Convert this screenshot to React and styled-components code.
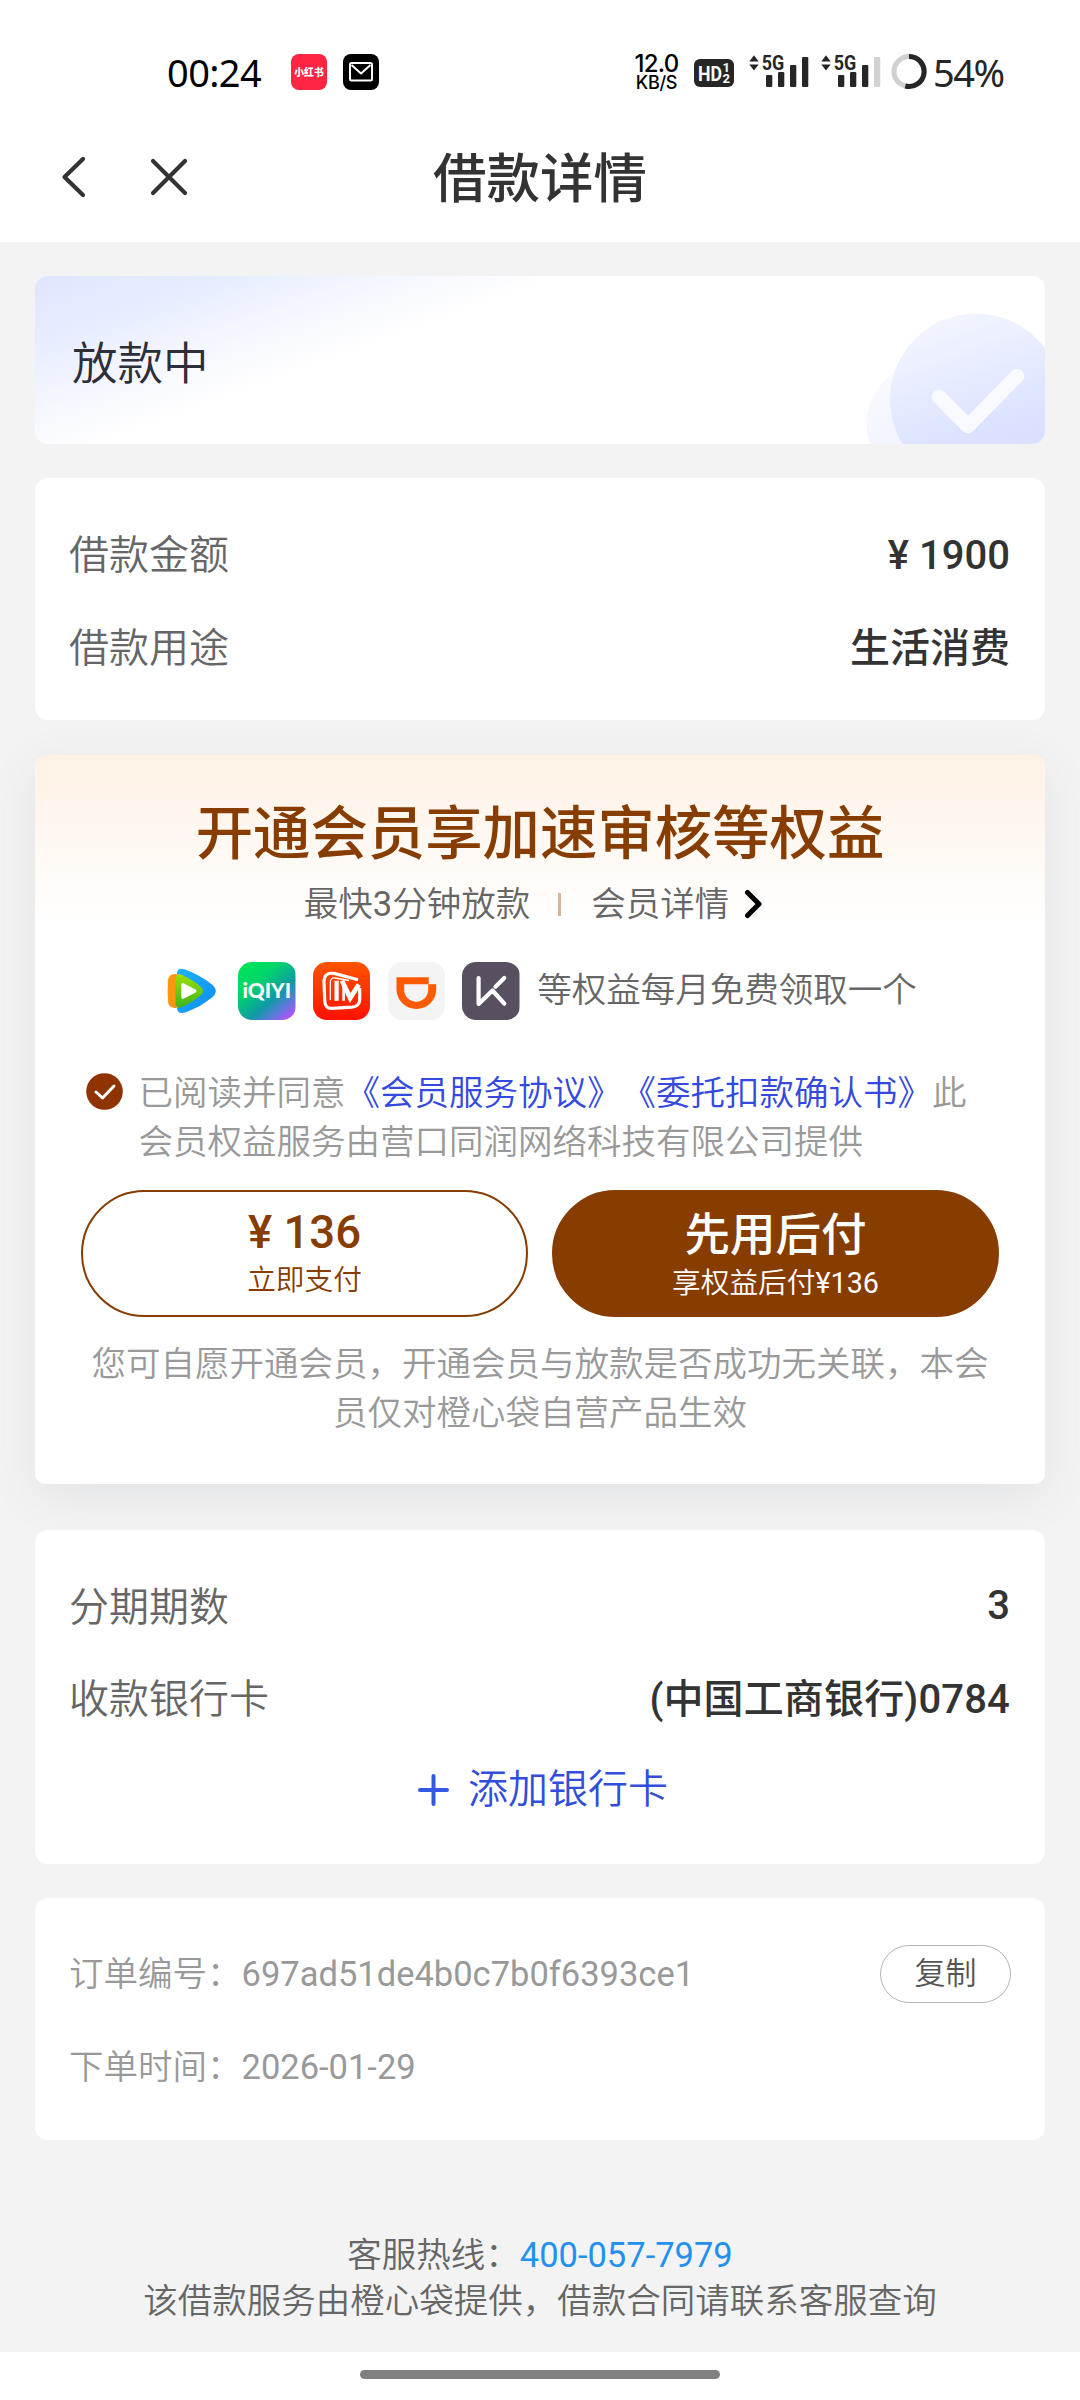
import React from "react";
import styled, { createGlobalStyle } from "styled-components";

const GlobalStyle = createGlobalStyle`
  * { box-sizing: border-box; }
  html, body { margin: 0; padding: 0; background: #fff; }
  body {
    font-family: Roboto, "Noto Sans CJK SC", sans-serif;
    text-spacing-trim: space-all;
    color: #333;
  }
  button { font-family: inherit; cursor: pointer; margin: 0; }
`;

const Screen = styled.div`
  width: 1080px;
  height: 2400px;
  display: flex;
  flex-direction: column;
  background: #f3f3f3;
  overflow: hidden;
`;

/* ---------- status bar ---------- */
const StatusBar = styled.div`
  height: 112px;
  padding: 32px 76px 0 167px;
  display: flex;
  align-items: center;
  background: #fff;
  flex: none;
`;
const Clock = styled.div`
  width: 124px;
  font: 400 38px/44px "Noto Sans", sans-serif;
  letter-spacing: -0.6px;
  color: #000;
  white-space: nowrap;
`;
const NoticeIcon = styled.div`
  width: 36px;
  height: 36px;
  border-radius: 8px;
  margin-right: 16px;
  background: ${(p) => p.$bg};
  color: #fff;
  font: 900 9.8px/36px "Noto Sans CJK SC", sans-serif;
  display: flex;
  align-items: center;
  justify-content: center;
  white-space: nowrap;
`;
const StatusRight = styled.div`
  margin-left: auto;
  display: flex;
  align-items: center;
`;
const NetSpeed = styled.div`
  display: flex;
  flex-direction: column;
  align-items: center;
  width: 46px;
  margin-right: 14px;
  color: #000;
  white-space: nowrap;
`;
const SpeedValue = styled.span`
  font: 500 24px/20px Inter, sans-serif;
  letter-spacing: -0.7px;
`;
const SpeedUnit = styled.span`
  font: 500 18px/17px Inter, sans-serif;
  letter-spacing: -0.3px;
`;
const HdBadge = styled.svg`
  margin: 2px 15px 0 0;
`;
const SignalIcon = styled.svg`
  flex: none;
`;
const RingIcon = styled.svg`
  margin-left: -2px;
  flex: none;
`;
const Battery = styled.span`
  font: 400 38px/44px "Noto Sans", sans-serif;
  letter-spacing: -1.5px;
  color: #262626;
  margin-left: 6.5px;
  width: 71px;
  white-space: nowrap;
`;

/* ---------- navigation ---------- */
const NavBar = styled.header`
  height: 130px;
  display: grid;
  grid-template-columns: 1fr auto 1fr;
  align-items: center;
  background: #fff;
  flex: none;
`;
const NavActions = styled.div`
  display: flex;
  gap: 62px;
  padding-left: 60px;
`;
const IconButton = styled.button`
  border: 0;
  padding: 0;
  background: none;
  display: flex;
`;
const PageTitle = styled.h1`
  margin: 6px 0 0;
  font-size: 53.5px;
  line-height: 64px;
  font-weight: 500;
`;

/* ---------- cards ---------- */
const Content = styled.main`
  flex: 1;
  padding: 34px 35px 0;
  display: flex;
  flex-direction: column;
`;
const Card = styled.section`
  flex: none;
  height: ${(p) => p.$h}px;
  margin-bottom: ${(p) => p.$gap ?? 34}px;
  padding: ${(p) => p.$pt ?? 32}px 35px 0 34px;
  border-radius: 13px;
  background: #fff;
`;
const StatusCard = styled(Card)`
  display: flex;
  align-items: center;
  justify-content: space-between;
  padding: 0 0 0 37px;
  overflow: hidden;
  background: linear-gradient(160deg, #dfe5ff 0%, #e8eeff 14%, #f5f7ff 25%, #fff 36%);
`;
const StatusText = styled.div`
  font-size: 45.5px;
  line-height: 60px;
  margin-top: 10px;
  font-weight: 350;
  color: #2c2e38;
`;
const Row = styled.div`
  height: ${(p) => p.$h ?? 92.5}px;
  display: flex;
  align-items: center;
  justify-content: ${(p) => (p.$center ? "center" : "space-between")};
`;
const Label = styled.span`
  font-size: 40px;
  line-height: 50px;
  font-weight: 350;
  color: #666;
`;
const Value = styled.span`
  font-size: 40px;
  line-height: 50px;
  font-weight: 500;
  color: #333;
  letter-spacing: ${(p) => p.$track || 0}px;
  padding-bottom: ${(p) => p.$lift || 0}px;
`;
const Digits = styled.span`
  font-weight: 400;
`;
const AddCard = styled.button`
  border: 0;
  padding: 0 0 0 7px;
  background: none;
  display: flex;
  align-items: center;
  gap: 19px;
  font-size: 40px;
  line-height: 50px;
  font-weight: 350;
  color: #334ddb;
`;

/* ---------- membership ---------- */
const MemberCard = styled(Card)`
  padding: 0;
  border-radius: 11px;
  display: flex;
  flex-direction: column;
  align-items: center;
  background: linear-gradient(180deg, #fff1e4 0, #fff5ec 50px, #fff 170px);
  box-shadow: 0 12px 46px rgba(90, 100, 120, 0.1);
`;
const MemberTitle = styled.h2`
  margin: 45px 0 0;
  font-size: 57.4px;
  line-height: 70px;
  font-weight: 500;
  color: #873c00;
  white-space: nowrap;
`;
const MemberSub = styled.div`
  display: flex;
  align-items: center;
  height: 48px;
  margin-top: 10px;
  padding-right: 11px;
  font-size: 34.5px;
  font-weight: 350;
  line-height: 48px;
  color: #666;
`;
const Divider = styled.i`
  width: 3px;
  height: 23px;
  margin: 0 30px 0 28px;
  background: #d8b698;
`;
const Chevron = styled.svg`
  margin-left: 14px;
`;
const Benefits = styled.div`
  display: flex;
  align-items: center;
  gap: 17.3px;
  height: 58px;
  margin-top: 34px;
  font-size: 34.5px;
  line-height: 48px;
  font-weight: 350;
  color: #666;
`;
const LogoTile = styled.svg`
  display: block;
  width: 57.5px;
  height: 58px;
  border-radius: 14px;
  flex: none;
`;
const BenefitsText = styled.span`
  margin: -3px 0 0;
  white-space: nowrap;
`;
const Agreement = styled.div`
  align-self: stretch;
  display: flex;
  gap: 16px;
  margin-top: 49px;
  padding-left: 50.500px;
  font-size: 34.5px;
  line-height: 49px;
  font-weight: 350;
  color: #999;
`;
const CheckIcon = styled.svg`
  flex: none;
  margin-top: 4px;
`;
const AgreementText = styled.p`
  margin: 0;
  width: 845px;
`;
const Link = styled.a`
  color: #3349e0;
`;
const PayButtons = styled.div`
  display: grid;
  grid-template-columns: 447px 447px;
  gap: 24px;
  margin-top: 23px;
`;
const PayButton = styled.button`
  height: 127px;
  padding: 0;
  border: 2px solid #873c00;
  border-radius: 64px;
  background: ${(p) => (p.$filled ? "#873c00" : "#fff")};
  color: ${(p) => (p.$filled ? "#fff" : "#873c00")};
  display: flex;
  flex-direction: column;
  align-items: center;
  justify-content: flex-start;
`;
const PayMain = styled.span`
  margin-top: ${(p) => p.$top}px;
  font-size: 45.5px;
  line-height: 50px;
  font-weight: 500;
`;
const PaySub = styled.span`
  margin-top: ${(p) => p.$top}px;
  font-size: 28.7px;
  line-height: 36px;
  font-weight: 350;
`;
const Note = styled.p`
  margin: 23px 0 0;
  width: 899px;
  text-align: center;
  font-size: 34.5px;
  line-height: 49px;
  font-weight: 350;
  color: #999;
`;

/* ---------- order ---------- */
const OrderText = styled.span`
  font-size: 34.5px;
  line-height: 48px;
  font-weight: 350;
  color: #999;
`;
const CopyButton = styled.button`
  width: 131px;
  height: 58px;
  margin-right: -1px;
  padding: 0;
  border: 1.5px solid #b5b5b5;
  border-radius: 29px;
  background: #fff;
  font-size: 31px;
  line-height: 54px;
  font-weight: 350;
  color: #555;
`;
const Footer = styled.footer`
  margin-top: 92px;
  text-align: center;
  font-size: 34.5px;
  line-height: 46px;
  font-weight: 350;
  color: #666;
`;
const Phone = styled.a`
  font-weight: 400;
  color: #2490ee;
`;
const HomeArea = styled.div`
  height: 48px;
  flex: none;
  background: #fff;
  display: flex;
  justify-content: center;
  padding-top: 18px;
`;
const HomePill = styled.div`
  width: 360px;
  height: 9px;
  border-radius: 5px;
  background: #808080;
`;

const SIGNAL_BARS = [
  [17, 21, 12],
  [29, 18, 15],
  [41, 11, 22],
  [53, 3, 30],
];

function Signal({ level }) {
  return (
    <SignalIcon width="72" height="52" viewBox="0 -8 72 52" fill="#262626">
      <path d="M0.300 7.500 L5 1.200 L9.700 7.500Z M0.300 10.500 L5 16.500 L9.700 10.500Z" />
      <text x="12.800" y="16.400" fontFamily="Roboto, sans-serif" fontWeight="700" fontSize="20.500" textLength="22.500" lengthAdjust="spacingAndGlyphs">5G</text>
      {SIGNAL_BARS.map(([x, y, h], i) => (
        <rect key={x} x={x} y={y} width="6.300" height={h} rx="1.200" fill={i < level ? "#262626" : "#d2d2d2"} />
      ))}
    </SignalIcon>
  );
}

function HdIcon() {
  return (
    <HdBadge width="40" height="28" viewBox="0 0 40 28" fill="#fff" fontFamily="Roboto, sans-serif" fontWeight="700">
      <rect width="40" height="28" rx="6" fill="#262626" />
      <text x="4" y="21.500" fontSize="21" textLength="24" lengthAdjust="spacingAndGlyphs">HD</text>
      <text x="28.500" y="13.200" fontSize="13">1</text>
      <text x="28.500" y="24.200" fontSize="13">2</text>
    </HdBadge>
  );
}

function BatteryRing() {
  return (
    <RingIcon width="36" height="36" viewBox="0 0 36 36" fill="none" strokeWidth="5">
      <circle cx="18" cy="17.500" r="15" stroke="#d0d0d0" />
      <path d="M18 2.500 A15 15 0 1 1 14.300 32" stroke="#262626" />
    </RingIcon>
  );
}

function StatusArt() {
  return (
    <svg width="180" height="168" viewBox="0 0 180 168">
      <defs>
        <linearGradient id="bigDisc" x1="0.3" y1="0" x2="0.65" y2="1">
          <stop offset="0" stopColor="#f3f6ff" />
          <stop offset="0.7" stopColor="#dbe2ff" />
          <stop offset="1" stopColor="#d6dfff" />
        </linearGradient>
        <linearGradient id="smallDisc" x1="0" y1="0" x2="0.6" y2="1">
          <stop offset="0" stopColor="#fbfcff" />
          <stop offset="1" stopColor="#eceffe" />
        </linearGradient>
      </defs>
      <circle cx="63" cy="148" r="61.5" fill="url(#smallDisc)" />
      <circle cx="111" cy="123.5" r="86" fill="url(#bigDisc)" />
      <path d="M74 121 L103 150 L152 100" fill="none" stroke="#f8faff" strokeWidth="14.500" strokeLinecap="round" strokeLinejoin="round" />
    </svg>
  );
}

function TencentVideo() {
  return (
    <LogoTile viewBox="0 0 57.5 58">
      <defs>
        <linearGradient id="tvGreen" x1="0" y1="0" x2="0" y2="1">
          <stop offset="0" stopColor="#9be000" />
          <stop offset="1" stopColor="#3fb41c" />
        </linearGradient>
        <linearGradient id="tvBlue" x1="0" y1="0" x2="1" y2="1">
          <stop offset="0" stopColor="#1fb2ff" />
          <stop offset="1" stopColor="#0b8cf5" />
        </linearGradient>
      </defs>
      <path d="M14 12 C14 7 17 6 22 7.500 C32 11 41 16 49 22.500 C54 27 54 31 49 35.500 C41 42 32 47 22 50.500 C17 52 14 50 14 46Z" fill="url(#tvBlue)" />
      <path d="M12 12 C7 12 5 15 4.900 20 Q4.300 29 4.900 38 C5 44 8 46 13 46 L20 44 V13Z" fill="#ff9511" />
      <path d="M12.600 17 C12.500 12.500 15 11.400 19 13 Q30 18 38 25 Q42 29 38 33 Q30 40 19 45 C15 46.600 12.500 45 12.600 41 Q12 29 12.600 17Z" fill="url(#tvGreen)" />
      <path d="M18.300 23 Q18.500 20.200 21 21.400 L32.500 27.500 Q34.500 29 32.500 30.500 L21 36.600 Q18.500 37.800 18.300 35Z" fill="#fff" />
    </LogoTile>
  );
}

function Iqiyi() {
  return (
    <LogoTile viewBox="0 0 57.5 58">
      <defs>
        <linearGradient id="iqBg" x1="0.1" y1="0" x2="0.95" y2="1">
          <stop offset="0" stopColor="#00e457" />
          <stop offset="0.3" stopColor="#00d66a" />
          <stop offset="0.62" stopColor="#0e9aa5" />
          <stop offset="0.8" stopColor="#5d79dc" />
          <stop offset="1" stopColor="#d443ff" />
        </linearGradient>
      </defs>
      <rect width="57.5" height="58" fill="url(#iqBg)" />
      <text x="4.500" y="36.200" fontFamily="Lato, sans-serif" fontWeight="900" fontSize="20.500" fill="#fff" textLength="48.500" lengthAdjust="spacingAndGlyphs">iQIYI</text>
    </LogoTile>
  );
}

function MangoTv() {
  return (
    <LogoTile viewBox="0 0 57.5 58">
      <defs>
        <linearGradient id="mgBg" x1="0" y1="0" x2="0" y2="1">
          <stop offset="0" stopColor="#ff5400" />
          <stop offset="1" stopColor="#ff1200" />
        </linearGradient>
      </defs>
      <rect width="57.5" height="58" fill="url(#mgBg)" />
      <g fill="none" stroke="#fff" strokeLinejoin="round">
        <path d="M45 17.800 L22 11.600 Q10.800 9.500 11 20.500 L11.800 39.500 Q12.300 46.800 19 46.400 L39 45.200 Q46.300 44.500 46.700 38 V26" strokeWidth="3.200" />
        <path d="M36 18.500 L22 16 Q17.300 15.500 17.300 20.500 V38" strokeWidth="1.300" />
        <path d="M23.600 38.800 V18.800" strokeWidth="4.200" />
        <path d="M30.600 38.800 V24" strokeWidth="2.600" />
        <path d="M29 18.800 L37.200 36 L45.800 22.500" strokeWidth="4.800" strokeLinejoin="miter" />
      </g>
    </LogoTile>
  );
}

function Didi() {
  return (
    <LogoTile viewBox="0 0 57.5 58">
      <rect width="57.5" height="58" fill="#f4f4f4" />
      <path fillRule="evenodd" fill="#ff5a00" d="M8.500 15.300 H40.700 V22.300 H48.200 V27.500 A19.850 19.600 0 0 1 8.500 27.500Z M16.200 22.300 H40.200 V28 A12 11.700 0 0 1 16.200 28Z" />
    </LogoTile>
  );
}

function Keep() {
  return (
    <LogoTile viewBox="0 0 57.5 58">
      <rect width="57.5" height="58" fill="#584f60" />
      <path d="M16.600 16 V42 L30.500 28.500 L42.300 41.700 M42.300 16 L33.500 24.700" fill="none" stroke="#fff" strokeWidth="4.200" strokeLinecap="round" strokeLinejoin="round" />
    </LogoTile>
  );
}

export default function App() {
  return (
    <Screen lang="zh-CN">
      <GlobalStyle />
      <StatusBar>
        <Clock>00:24</Clock>
        <NoticeIcon $bg="#ff2543">小红书</NoticeIcon>
        <NoticeIcon $bg="#000">
          <svg width="24" height="20" viewBox="0 0 24 20" fill="none" stroke="#fff" strokeWidth="2" strokeLinejoin="round">
            <rect x="1" y="1" width="22" height="17.500" rx="1.500" />
            <path d="M2.500 3 L12 11.500 L21.500 3" />
          </svg>
        </NoticeIcon>
        <StatusRight>
          <NetSpeed>
            <SpeedValue>12.0</SpeedValue>
            <SpeedUnit>KB/S</SpeedUnit>
          </NetSpeed>
          <HdIcon />
          <Signal level={4} />
          <Signal level={3} />
          <BatteryRing />
          <Battery>54%</Battery>
        </StatusRight>
      </StatusBar>

      <NavBar>
        <NavActions>
          <IconButton aria-label="返回">
            <svg width="28" height="44" viewBox="0 0 28 44" fill="none" stroke="#333" strokeWidth="4.200" strokeLinecap="round" strokeLinejoin="round">
              <path d="M23 4 L4.500 22 L23 40" />
            </svg>
          </IconButton>
          <IconButton aria-label="关闭">
            <svg width="38" height="44" viewBox="0 0 38 44" fill="none" stroke="#333" strokeWidth="4.200" strokeLinecap="round">
              <path d="M3 6 L35 38 M35 6 L3 38" />
            </svg>
          </IconButton>
        </NavActions>
        <PageTitle>借款详情</PageTitle>
        <span />
      </NavBar>

      <Content>
        <StatusCard $h={168}>
          <StatusText>放款中</StatusText>
          <StatusArt />
        </StatusCard>

        <Card $h={242} $gap={35}>
          <Row>
            <Label>借款金额</Label>
            <Value>¥ 1900</Value>
          </Row>
          <Row>
            <Label>借款用途</Label>
            <Value>生活消费</Value>
          </Row>
        </Card>

        <MemberCard $h={729} $gap={46}>
          <MemberTitle>开通会员享加速审核等权益</MemberTitle>
          <MemberSub>
            <span>最快<Digits>3</Digits>分钟放款</span>
            <Divider />
            会员详情
            <Chevron width="22" height="30" viewBox="0 0 22 30" fill="none" stroke="#000" strokeWidth="5" strokeLinecap="round" strokeLinejoin="round">
              <path d="M4.500 3.500 L16 15 L4.500 26.500" />
            </Chevron>
          </MemberSub>
          <Benefits>
            <TencentVideo />
            <Iqiyi />
            <MangoTv />
            <Didi />
            <Keep />
            <BenefitsText>等权益每月免费领取一个</BenefitsText>
          </Benefits>
          <Agreement>
            <CheckIcon width="37" height="37" viewBox="0 0 37 37">
              <circle cx="18.500" cy="18.500" r="18.300" fill="#8f3300" />
              <path d="M10 19 L16.500 25 L28 13" fill="none" stroke="#fff" strokeWidth="3" strokeLinecap="round" strokeLinejoin="round" />
            </CheckIcon>
            <AgreementText>
              已阅读并同意<Link>《会员服务协议》</Link><Link>《委托扣款确认书》</Link>此会员权益服务由营口同润网络科技有限公司提供
            </AgreementText>
          </Agreement>
          <PayButtons>
            <PayButton>
              <PayMain $top={16}>¥ 136</PayMain>
              <PaySub $top={4}>立即支付</PaySub>
            </PayButton>
            <PayButton $filled>
              <PayMain $top={19}>先用后付</PayMain>
              <PaySub $top={4}>享权益后付<Digits>¥136</Digits></PaySub>
            </PayButton>
          </PayButtons>
          <Note>您可自愿开通会员，开通会员与放款是否成功无关联，本会员仅对橙心袋自营产品生效</Note>
        </MemberCard>

        <Card $h={334}>
          <Row>
            <Label>分期期数</Label>
            <Value $lift={5}>3</Value>
          </Row>
          <Row $h={91}>
            <Label>收款银行卡</Label>
            <Value $track={0.15}>(中国工商银行)0784</Value>
          </Row>
          <Row $center $h={89}>
            <AddCard>
              <svg width="31" height="32" viewBox="0 0 31 32" stroke="#3358e6" strokeWidth="4" strokeLinecap="round">
                <path d="M15.500 2 V30 M2 16 H29" />
              </svg>
              添加银行卡
            </AddCard>
          </Row>
        </Card>

        <Card $h={242} $gap={0} $pt={30}>
          <Row>
            <OrderText>订单编号：<Digits>697ad51de4b0c7b0f6393ce1</Digits></OrderText>
            <CopyButton>复制</CopyButton>
          </Row>
          <Row>
            <OrderText>下单时间：<Digits>2026-01-29</Digits></OrderText>
          </Row>
        </Card>

        <Footer>
          <div>
            客服热线：<Phone>400-057-7979</Phone>
          </div>
          <div>该借款服务由橙心袋提供，借款合同请联系客服查询</div>
        </Footer>
      </Content>

      <HomeArea>
        <HomePill />
      </HomeArea>
    </Screen>
  );
}
